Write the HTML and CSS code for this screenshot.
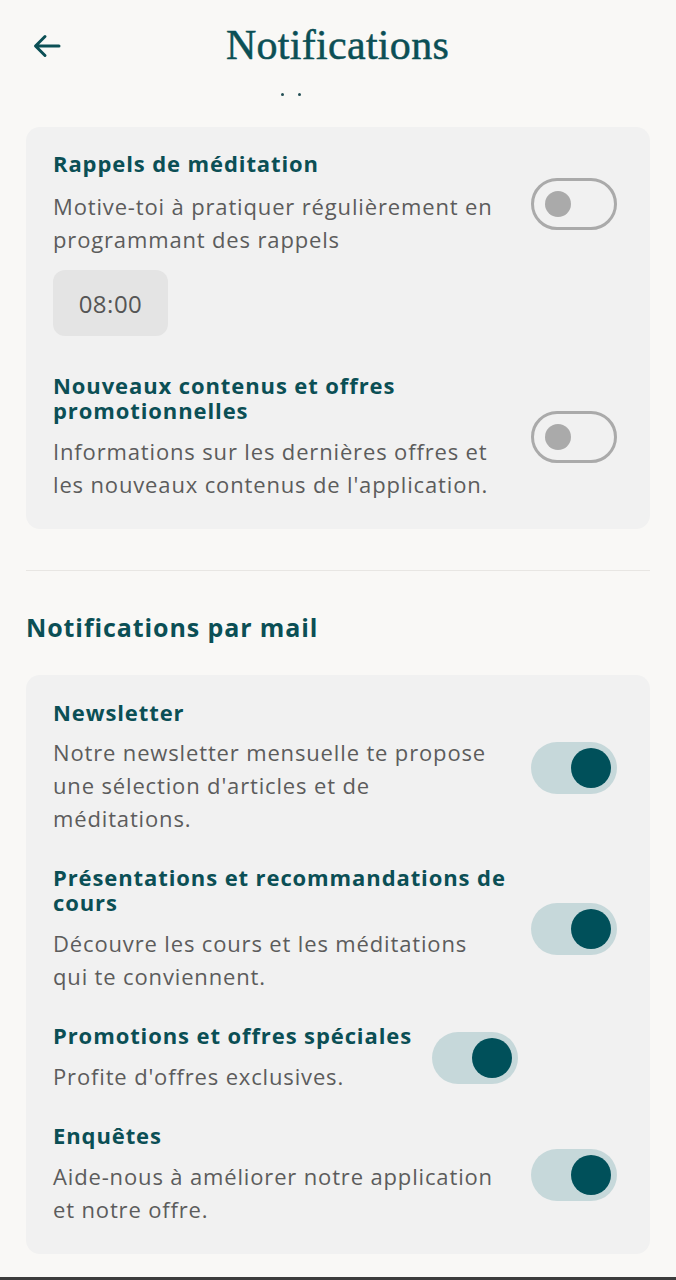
FILE: index.html
```html
<!DOCTYPE html>
<html lang="fr">
<head>
<meta charset="utf-8">
<title>Notifications</title>
<link rel="stylesheet" href="styles.css">
</head>
<body>
<header class="topbar">
  <button class="back" aria-label="Retour">
    <svg width="28" height="24" viewBox="0 0 28 24" fill="none" stroke="#0b4f55" stroke-width="3" stroke-linecap="round" stroke-linejoin="round"><path d="M26 12H3M12 2.5L2.5 12L12 21.5"/></svg>
  </button>
  <h1 class="title">Notifications</h1>
  <span></span>
</header>
<div class="dots"><span class="dot"></span><span class="dot"></span></div>
<main class="content">
  <section class="card">
    <div class="group">
      <div class="item">
        <div class="item-text">
          <h3 class="item-title item-title-spaced">Rappels de méditation</h3>
          <p class="item-desc">Motive-toi à pratiquer régulièrement en programmant des rappels</p>
        </div>
        <span class="toggle"><span class="knob"></span></span>
      </div>
      <div class="chip">08:00</div>
    </div>
    <div class="group">
      <div class="item">
        <div class="item-text">
          <h3 class="item-title">Nouveaux contenus et offres promotionnelles</h3>
          <p class="item-desc">Informations sur les dernières offres et les nouveaux contenus de l'application.</p>
        </div>
        <span class="toggle"><span class="knob"></span></span>
      </div>
    </div>
  </section>
  <hr class="divider">
  <h2 class="section-title">Notifications par mail</h2>
  <section class="card card-mail">
    <div class="item">
      <div class="item-text">
        <h3 class="item-title item-title-tight">Newsletter</h3>
        <p class="item-desc">Notre newsletter mensuelle te propose une sélection d'articles et de méditations.</p>
      </div>
      <span class="toggle on"><span class="knob"></span></span>
    </div>
    <div class="item">
      <div class="item-text">
        <h3 class="item-title">Présentations et recommandations de cours</h3>
        <p class="item-desc">Découvre les cours et les méditations qui te conviennent.</p>
      </div>
      <span class="toggle on"><span class="knob"></span></span>
    </div>
    <div class="item">
      <div class="item-text">
        <h3 class="item-title">Promotions et offres spéciales</h3>
        <p class="item-desc">Profite d'offres exclusives.</p>
      </div>
      <span class="toggle on"><span class="knob"></span></span>
    </div>
    <div class="item">
      <div class="item-text">
        <h3 class="item-title">Enquêtes</h3>
        <p class="item-desc">Aide-nous à améliorer notre application et notre offre.</p>
      </div>
      <span class="toggle on"><span class="knob"></span></span>
    </div>
  </section>
</main>
<div class="bottom-edge"></div>
</body>
</html>
```

FILE: styles.css
```css
* { box-sizing: border-box; }
html, body { margin: 0; padding: 0; }
body {
  background: #f9f8f6;
  font-family: "Open Sans", Inter, "Liberation Sans", sans-serif;
  width: 676px;
  height: 1280px;
  overflow: hidden;
  display: flex;
  flex-direction: column;
}
.topbar {
  display: grid;
  grid-template-columns: 1fr auto 1fr;
  align-items: center;
  height: 90px;
  padding: 0 34px 0 33px;
}
.back {
  justify-self: start;
  background: none;
  border: 0;
  padding: 0;
  display: flex;
  margin-top: 2px;
}
.title {
  margin: 0;
  font-family: "Liberation Serif", "DejaVu Serif", serif;
  font-size: 42px;
  font-weight: 400;
  color: #0b4f55;
  letter-spacing: 0.3px;
  -webkit-text-stroke: 0.5px #0b4f55;
}
.dots {
  display: flex;
  justify-content: center;
  gap: 14px;
  height: 37px;
  padding-top: 3px;
  padding-right: 94px;
}
.dot {
  width: 3px;
  height: 3px;
  border-radius: 50%;
  background: #244f55;
}
.content {
  padding: 0 26px;
  flex: 1;
}
.card {
  background: #f1f1f1;
  border-radius: 14px;
  padding: 24px 33px 28px 27px;
  display: flex;
  flex-direction: column;
  gap: 37px;
}
.card-mail {
  padding-top: 25px;
  padding-bottom: 28px;
  gap: 30px;
}
.item {
  display: flex;
  align-items: center;
  gap: 20px;
}
.item-text {
  flex: 0 1 auto;
  max-width: 458px;
}
.item-title {
  margin: 0 0 12px;
  font-size: 22px;
  line-height: 25px;
  font-weight: 700;
  color: #0b4f55;
  letter-spacing: 0.9px;
}
.item-title-spaced { margin-bottom: 14px; }
.item-title-tight { margin-bottom: 11px; }
.item-desc {
  margin: 0;
  padding-right: 10px;
  font-size: 22px;
  line-height: 33px;
  color: #5c5c5c;
  letter-spacing: 0.85px;
}
.chip {
  margin-top: 14px;
  width: 115px;
  height: 66px;
  border-radius: 12px;
  background: #e4e4e4;
  display: flex;
  align-items: center;
  justify-content: center;
  font-size: 24px;
  color: #555;
  letter-spacing: 0.5px;
}
.toggle {
  flex: none;
  width: 86px;
  height: 52px;
  border-radius: 26px;
  border: 3px solid #aaaaaa;
  display: flex;
  align-items: center;
  padding-left: 11px;
}
.knob {
  width: 26px;
  height: 26px;
  border-radius: 50%;
  background: #aaaaaa;
}
.toggle.on {
  border: 0;
  background: #c6d8da;
  justify-content: flex-end;
  padding: 0 6px 0 0;
}
.toggle.on .knob {
  width: 40px;
  height: 40px;
  background: #00505a;
}
.divider {
  margin: 41px 0 0;
  border: 0;
  border-top: 1px solid #e8e6e3;
}
.section-title {
  margin: 40px 0 32px;
  font-size: 25px;
  line-height: 32px;
  font-weight: 700;
  color: #0b4f55;
  letter-spacing: 0.9px;
}
.bottom-edge {
  height: 3px;
  background: #3c3c3c;
  flex: none;
}
```
